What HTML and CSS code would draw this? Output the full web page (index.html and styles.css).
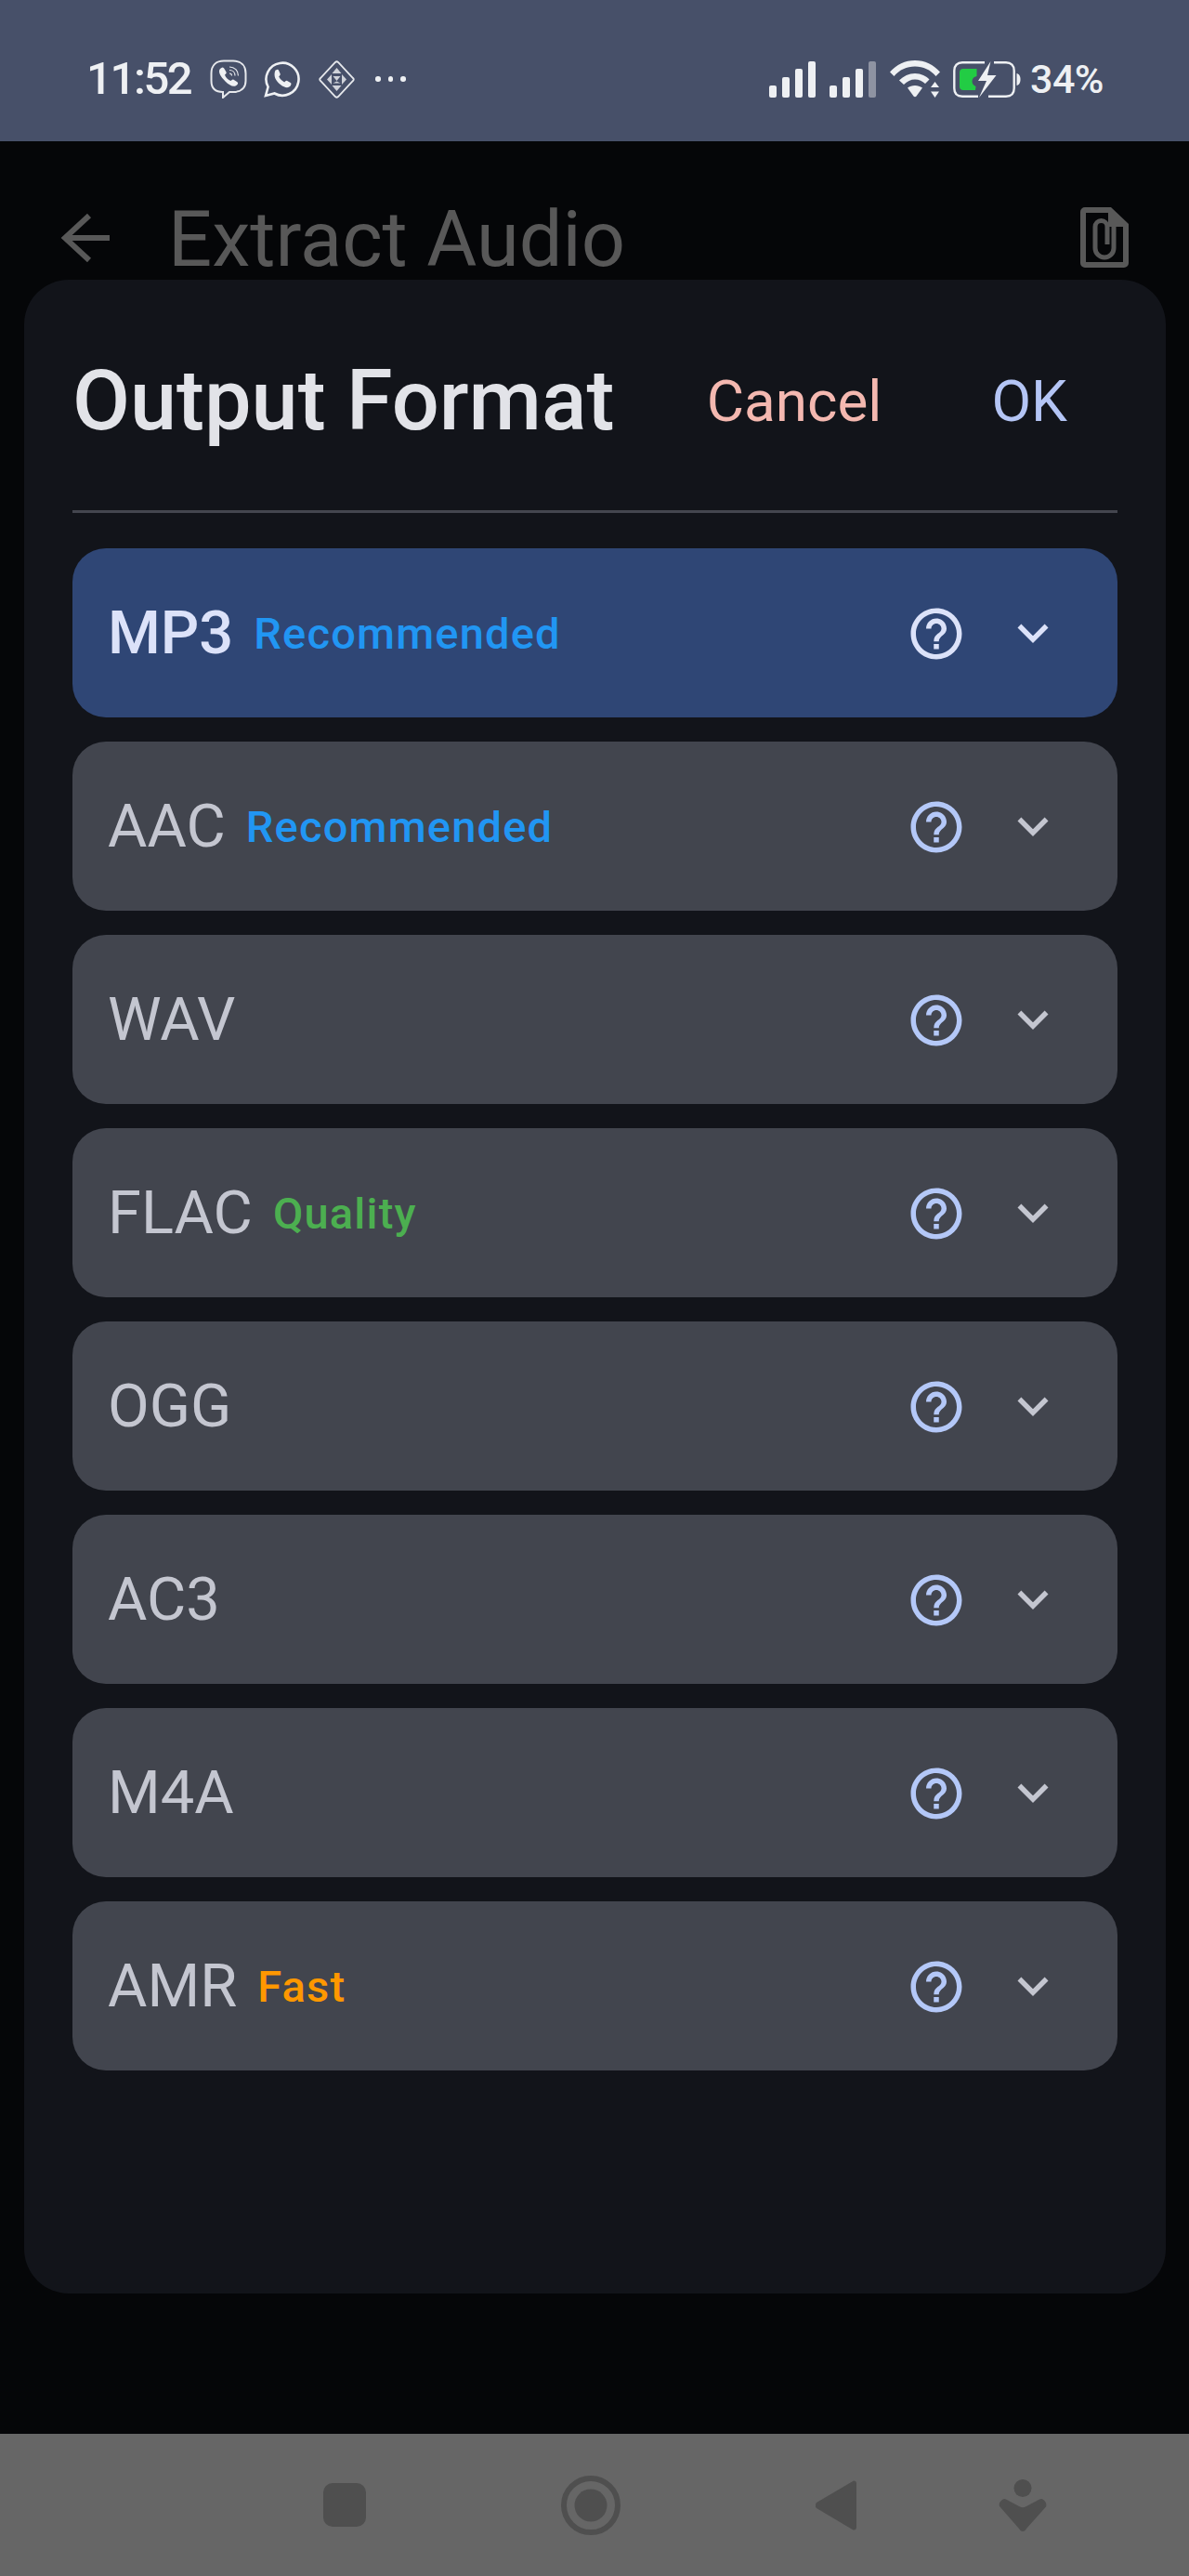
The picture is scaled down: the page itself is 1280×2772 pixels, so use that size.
FILE: index.html
```html
<!DOCTYPE html>
<html lang="en">
<head>
<meta charset="utf-8">
<title>Output Format</title>
<link rel="stylesheet" href="styles.css">
</head>
<body>
<svg class="defs" width="0" height="0" aria-hidden="true">
  <symbol id="help" viewBox="0 0 24 24"><path d="M11 18h2v-2h-2v2zm1-16C6.48 2 2 6.48 2 12s4.48 10 10 10 10-4.48 10-10S17.520 2 12 2zm0 18c-4.41 0-8-3.59-8-8s3.59-8 8-8 8 3.59 8 8-3.59 8-8 8zm0-14c-2.21 0-4 1.79-4 4h2c0-1.1.9-2 2-2s2 .9 2 2c0 2-3 1.75-3 5h2c0-2.25 3-2.500 3-5 0-2.21-1.79-4-4-4z"/></symbol>
  <symbol id="chev" viewBox="0 0 24 24"><path d="M16.59 8.59 12 13.17 7.41 8.59 6 10l6 6 6-6z"/></symbol>
  <symbol id="sig-bars" viewBox="0 0 50 39"><rect x="0" y="26" width="8" height="13" rx="2"/><rect x="14" y="17" width="8" height="22" rx="2"/><rect x="28" y="8" width="8" height="31" rx="2"/></symbol>
</svg>
<div class="screen">
  <div class="status">
    <div class="status-left">
      <span class="time">11:52</span>
      <svg class="ic-viber" viewBox="0 0 40 42" fill="none" stroke="#e6e8ec" stroke-width="2"><path d="M14 35C6 35 1.500 31 1.500 23v-8C1.500 6 7 1.500 15 1.500h10C33 1.500 38.500 6 38.500 15v8c0 8-5.500 12-13.500 12h-4l-7 6z"/><path d="M11 10c2-2 3.500-2 4.500 0l2 3.500c.6 1.200-.5 2.200-1.500 3 1 3 3.500 5.500 6.500 6.500 1-1 2-2 3-1.300l3.500 2.300c1.500 1 1.500 2 0 3.500-3 3-8 .5-12.500-4S8 13.500 11 10z" fill="#eef0f3" stroke="none"/><path d="M21 8c5.500 0 9.500 4 9.500 9.500M21 11.500c3.500 0 6 2.500 6 6M21 15c1.500 0 2.500 1 2.500 2.500" stroke-width="1.200"/></svg>
      <svg class="ic-wa" viewBox="0 0 39 40" fill="none" stroke="#eef0f3" stroke-width="2.600"><path d="M2 38l2.600-9.500A17.500 17.500 0 1 1 11.500 35.500z"/><path d="M13 10.500c1.500-1 2.500-1 3.200.5l1.500 3.500c.4 1-.7 2-1.500 3 1.500 3 3.500 4.500 6 6 1-1 2-2 3-1.500l3.500 2c1 .5 1 1.500.2 3-2 3-6 3-11-1s-8-9-5.400-15.500z" fill="#eef0f3" stroke="none"/></svg>
      <svg class="ic-dia" viewBox="0 0 39 41" fill="none" stroke="#e6e8ec" stroke-width="1.800"><path d="M18 2c1-1 2-1 3 0l16 17c1 1 1 2 0 3L21 39c-1 1-2 1-3 0L2 22c-1-1-1-2 0-3z"/><path d="M19.500 8l5 6h-10zM19.500 33l-5-6h10zM9 20.500l5-5.500v11zM30 20.500l-5-5.500v11zM15.500 17h8l-4 5zM15.500 24.500l4-2 4 2z" fill="#cfd2d9" stroke="none"/></svg>
      <span class="more"><i></i><i></i><i></i></span>
    </div>
    <div class="status-right">
      <svg class="ic-sig"><use href="#sig-bars"/><rect x="42" y="0" width="8" height="39" rx="2"/></svg>
      <svg class="ic-sig"><use href="#sig-bars"/><rect class="dim" x="42" y="0" width="8" height="39" rx="2"/></svg>
      <svg class="ic-wifi" viewBox="0 0 54 40" fill="#eef0f3"><path d="M0 12.500C7 4.500 16.500 0 27 0s20 4.500 27 12.500l-4.500 4.500C43.500 10 36 6.500 27 6.500S10.500 10 4.500 17z"/><path d="M10 21.500c4.500-4.500 10.500-7.500 17-7.500s12.500 3 15.500 6.500L38 25c-3-2.500-6.500-4.500-11-4.500S18.500 22.500 15 26z"/><path d="M19 29.500c2-1.500 5-2.500 8-2.500s5.500 1 8 2.500l-6.500 9c-.8 1-2.200 1-3 0z"/><path d="M48.500 23l4.500 6h-9zM48.500 40l-4.500-6.500h9z"/></svg>
      <svg class="ic-bat" viewBox="0 0 73 39"><path d="M34 1.300H10C4.500 1.300 1.300 4.500 1.300 10v19c0 5.500 3.200 8.700 8.700 8.700h17M38 37.700h19c5.500 0 8.700-3.200 8.700-8.700V10c0-5.500-3.200-8.700-8.700-8.700H44" fill="none" stroke="#eef0f3" stroke-width="2.400"/><path d="M68.500 13c2.500.8 4 2.500 4 6.500s-1.500 5.700-4 6.500z" fill="#eef0f3"/><path d="M11 8h14.500v8c-3 .5-5 2.500-5 5.500 0 2.500 1.500 4.500 4 5.500l-.5 4H11c-2.500 0-4-1.500-4-4V12c0-2.500 1.500-4 4-4z" fill="#22cc44"/><path d="M40.500 0 27 21h9l-8 18 18.500-24H37z" fill="#eef0f3"/></svg>
      <span class="pct">34%</span>
    </div>
  </div>
  <div class="appbar">
    <svg class="ic-back" viewBox="0 0 53 52" fill="none" stroke="#585858" stroke-width="6"><path d="M31 2 5 26l26 24M5 26h48"/></svg>
    <span class="appbar-title">Extract Audio</span>
    <svg class="ic-file" viewBox="0 0 52 65"><path fill="#585858" fill-rule="evenodd" d="M5 0h28l19 18v42a5 5 0 0 1-5 5H5a5 5 0 0 1-5-5V5a5 5 0 0 1 5-5zm1 6v53h40V21H30V6z"/><path d="M36 20v24a10 10 0 0 1-20 0V21a6.500 6.500 0 0 1 13 0v19" fill="none" stroke="#585858" stroke-width="5"/></svg>
  </div>
  <div class="main"></div>
  <div class="nav">
    <span class="nav-sq"></span>
    <svg class="ic-home" viewBox="0 0 64 64"><circle cx="32" cy="32" r="29" fill="none" stroke="#4f4f4f" stroke-width="6"/><circle cx="32" cy="32" r="17.500" fill="#4f4f4f"/></svg>
    <svg class="ic-tri" viewBox="0 0 44 54" fill="#4f4f4f"><path d="M41 .5c2 0 3 1 3 3v47c0 2-1.500 3.500-3.500 3L1 30c-1.500-1.500-1.500-4 0-6z"/></svg>
    <svg class="ic-person" viewBox="0 0 54 56" fill="#4f4f4f"><ellipse cx="27" cy="9.500" rx="9.500" ry="9.500"/><path d="M5 22c1-1 2.500-1.500 4-.5l15 8c2 1 4 1 6 0l15-8c2-1 3.500-.5 5 1 2 2 3 4.500 2 7L31 53c-2 4-6 4-8 0L2 29c-1-2 0-5 3-7z"/></svg>
  </div>
  <div class="sheet">
    <div class="sheet-head">
      <h1 class="sheet-title">Output Format</h1>
      <span class="btn btn-cancel">Cancel</span>
      <span class="btn btn-ok">OK</span>
    </div>
    <div class="rule"></div>
    <div class="list">
      <div class="row row-on"><span class="name">MP3</span><span class="tag t-blue">Recommended</span><svg class="help"><use href="#help"/></svg><svg class="chev"><use href="#chev"/></svg></div>
      <div class="row"><span class="name">AAC</span><span class="tag t-blue">Recommended</span><svg class="help"><use href="#help"/></svg><svg class="chev"><use href="#chev"/></svg></div>
      <div class="row"><span class="name">WAV</span><svg class="help"><use href="#help"/></svg><svg class="chev"><use href="#chev"/></svg></div>
      <div class="row"><span class="name">FLAC</span><span class="tag t-green">Quality</span><svg class="help"><use href="#help"/></svg><svg class="chev"><use href="#chev"/></svg></div>
      <div class="row"><span class="name">OGG</span><svg class="help"><use href="#help"/></svg><svg class="chev"><use href="#chev"/></svg></div>
      <div class="row"><span class="name">AC3</span><svg class="help"><use href="#help"/></svg><svg class="chev"><use href="#chev"/></svg></div>
      <div class="row"><span class="name">M4A</span><svg class="help"><use href="#help"/></svg><svg class="chev"><use href="#chev"/></svg></div>
      <div class="row"><span class="name">AMR</span><span class="tag t-orange">Fast</span><svg class="help"><use href="#help"/></svg><svg class="chev"><use href="#chev"/></svg></div>
    </div>
  </div>
</div>
</body>
</html>
```

FILE: styles.css
```css
* { box-sizing: border-box; }
html, body { margin: 0; padding: 0; background: #050608; }
.defs { display: block; height: 0; }
.screen {
  position: relative;
  width: 1280px;
  height: 2772px;
  display: flex;
  flex-direction: column;
  overflow: hidden;
  font-family: Roboto, "Noto Sans", sans-serif;
  background: #050608;
}
.status {
  height: 152px;
  flex: none;
  background: #475069;
  display: flex;
  justify-content: space-between;
  align-items: flex-start;
  padding: 64px 92px 0 93px;
  color: #eef0f3;
}
.status-left { display: flex; align-items: center; height: 42px; }
.time { font-size: 49px; font-weight: 500; line-height: 42px; letter-spacing: -2.400px; margin-right: 21px; }
.ic-viber { width: 40px; height: 42px; margin-right: 18px; }
.ic-wa { width: 39px; height: 40px; margin-right: 20px; }
.ic-dia { width: 39px; height: 41px; margin-right: 22px; }
.more { display: flex; gap: 8px; }
.more i { width: 5.500px; height: 5.500px; border-radius: 50%; background: #eef0f3; }
.status-right { display: flex; align-items: center; height: 42px; }
.ic-sig { width: 50px; height: 39px; margin-right: 15px; fill: #eef0f3; }
.ic-sig .dim { fill: #8e93a2; }
.ic-wifi { width: 54px; height: 40px; margin-right: 14px; }
.ic-bat { width: 73px; height: 39px; margin-right: 10px; }
.pct { font-size: 43px; font-weight: 500; line-height: 42px; letter-spacing: -.5px; }

.appbar {
  height: 149px;
  flex: none;
  display: flex;
  align-items: flex-start;
  padding: 78px 0 0 65px;
  position: relative;
}
.ic-back { width: 53px; height: 52px; }
.appbar-title { font-size: 83px; line-height: 84px; color: #585858; margin-left: 63px; margin-top: -14px; white-space: nowrap; }
.ic-file { width: 52px; height: 65px; margin-left: auto; margin-right: 65px; margin-top: -7px; }
.main { flex: 1; }
.nav {
  height: 153px;
  flex: none;
  background: #666666;
  display: flex;
  align-items: center;
  padding-left: 348px;
}
.nav-sq { width: 46px; height: 47px; border-radius: 10px; background: #4f4f4f; }
.ic-home { width: 64px; height: 64px; margin-left: 210px; }
.ic-tri { width: 44px; height: 54px; margin-left: 210px; }
.ic-person { width: 54px; height: 56px; margin-left: 152px; }

.sheet {
  position: absolute;
  left: 26px;
  top: 301px;
  width: 1229px;
  height: 2167px;
  background: #12141a;
  border-radius: 48px;
  padding: 0 52px;
}
.sheet-head { height: 248px; display: flex; align-items: center; padding-top: 14px; }
.sheet-title { margin: 0; font-size: 90px; font-weight: 500; color: #e2e3e8; line-height: 100px; flex: 1; }
.btn { font-size: 62px; line-height: 70px; }
.btn-cancel { color: #f4b8b0; margin-right: 118px; }
.btn-ok { color: #b4c5f5; margin-right: 54px; }
.rule { height: 3px; background: #44464f; }
.list { display: flex; flex-direction: column; gap: 26px; padding-top: 38px; }
.row {
  height: 182px;
  border-radius: 36px;
  background: #42454e;
  display: flex;
  align-items: center;
  padding: 0 0 0 38px;
  color: #c4c6d0;
}
.row-on { background: #2f4675; color: #dce2f9; }
.name { font-size: 65px; line-height: 70px; }
.row-on .name { font-weight: 500; }
.tag { font-size: 47px; line-height: 52px; margin-left: 22px; font-weight: 500; letter-spacing: 1.200px; padding-top: 2px; }
.t-blue { color: #2196f3; }
.t-green { color: #4caf50; }
.t-orange { color: #ff9800; }
.help { width: 66px; height: 66px; margin-left: auto; margin-top: 1px; fill: #b4c8f8; }
.row-on .help { fill: #dce2f9; }
.chev { width: 66px; height: 66px; margin-left: 38px; margin-right: 58px; fill: #c4c6d0; }
.row-on .chev { fill: #dce2f9; }
```
